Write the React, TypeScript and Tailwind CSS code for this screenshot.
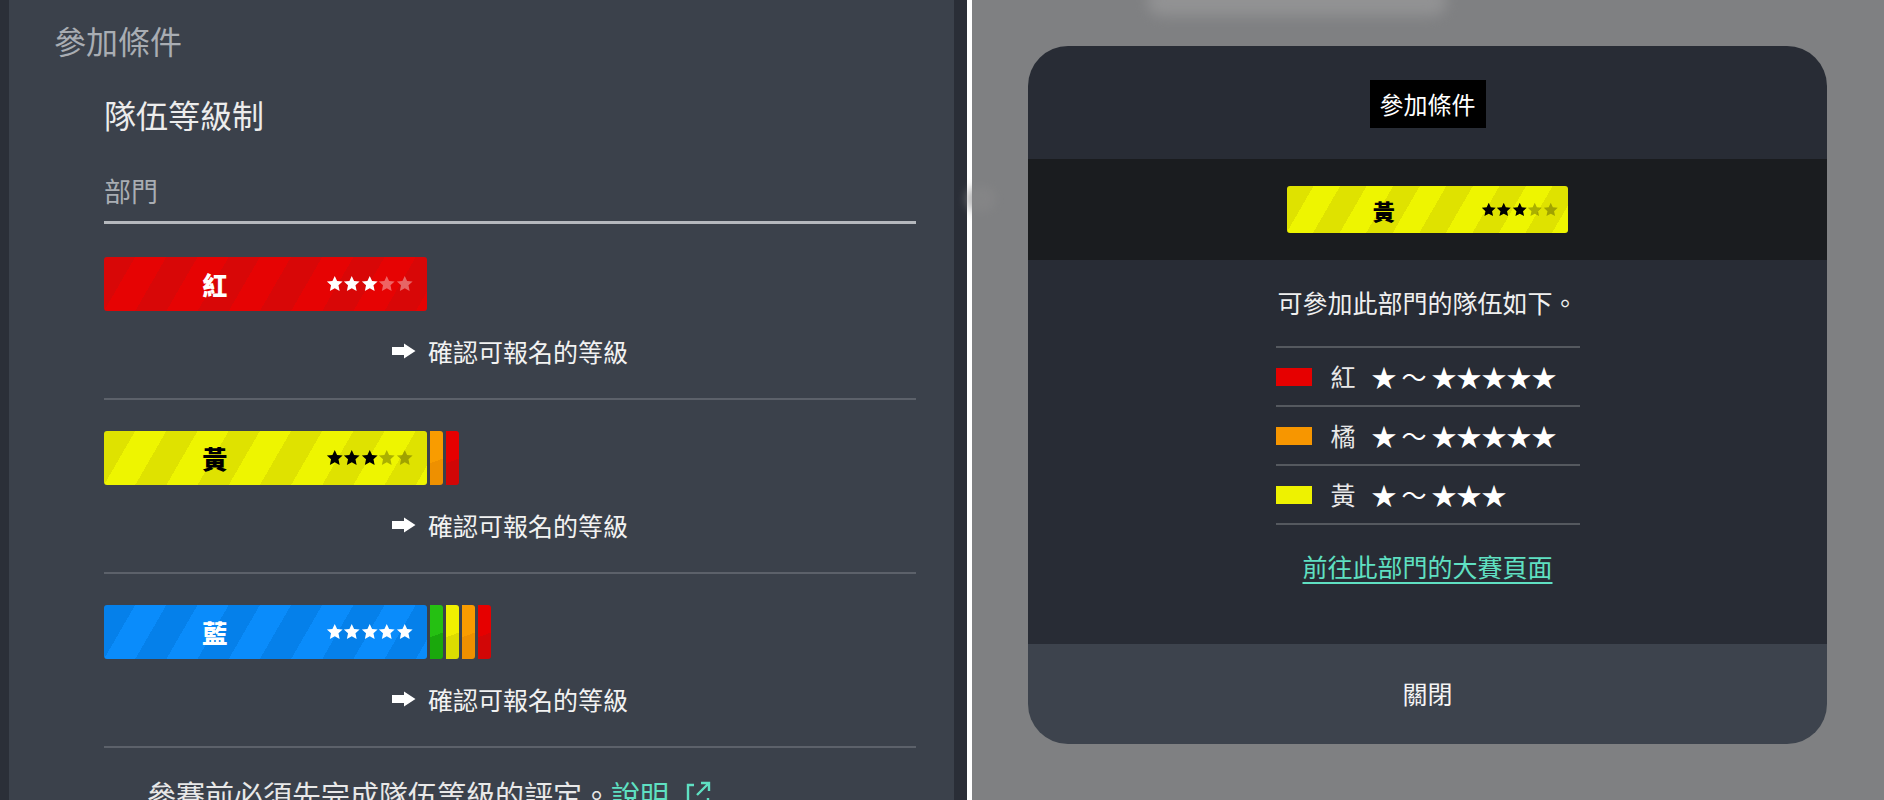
import React from "react";

const STAR_POINTS = "12,1.2 15.2,8.1 22.8,9 17.1,14.2 18.7,21.8 12,18 5.3,21.8 6.9,14.2 1.2,9 8.8,8.1";

function Star({ size, color, opacity }: { size: number; color: string; opacity: number }) {
  return (
    <svg width={size} height={size} viewBox="0 0 24 24" style={{ opacity }}>
      <polygon points={STAR_POINTS} fill={color} />
    </svg>
  );
}

type BarKind = "red" | "yellow" | "blue";

const barBg: Record<BarKind, string> = {
  red: "bg-[repeating-linear-gradient(120deg,#d80707_0px,#d80707_27px,#e60303_27px,#e60303_54px)]",
  yellow: "bg-[repeating-linear-gradient(120deg,#dfe200_0px,#dfe200_27px,#eef500_27px,#eef500_54px)]",
  blue: "bg-[repeating-linear-gradient(120deg,#0580ea_0px,#0580ea_27px,#0a8cfb_27px,#0a8cfb_54px)]",
};

const barSmallBg: Record<BarKind, string> = {
  red: "bg-[repeating-linear-gradient(120deg,#d80707_0px,#d80707_23px,#e60303_23px,#e60303_46px)]",
  yellow: "bg-[repeating-linear-gradient(120deg,#dfe200_0px,#dfe200_23px,#eef500_23px,#eef500_46px)]",
  blue: "bg-[repeating-linear-gradient(120deg,#0580ea_0px,#0580ea_23px,#0a8cfb_23px,#0a8cfb_46px)]",
};

const tabBg: Record<string, string> = {
  green: "bg-[linear-gradient(160deg,#25c012_55%,#1aa80c_55%)]",
  yellow: "bg-[linear-gradient(160deg,#f0f000_55%,#dcdc00_55%)]",
  orange: "bg-[linear-gradient(160deg,#f99c00_55%,#ee9000_55%)]",
  red: "bg-[linear-gradient(160deg,#e60000_55%,#d20606_55%)]",
};

function Bar({
  kind,
  label,
  filled,
  small,
}: {
  kind: BarKind;
  label: string;
  filled: number;
  small?: boolean;
}) {
  const textColor = kind === "yellow" ? "text-black" : "text-white";
  const starColor = kind === "yellow" ? "#000000" : "#ffffff";
  const fadeOpacity = kind === "yellow" ? 0.28 : 0.38;
  const starSize = small ? 15.5 : 17.5;
  return (
    <div
      className={
        small
          ? `flex h-[47px] w-[281px] items-center rounded-[3px] ${barSmallBg[kind]}`
          : `flex h-[54px] w-[323px] items-center rounded-[3px] ${barBg[kind]}`
      }
    >
      <span
        className={
          small
            ? `w-[196px] text-center text-[22px] font-black leading-none ${textColor}`
            : `w-[226px] text-center text-[25px] font-black leading-none ${textColor}`
        }
      >
        {label}
      </span>
      <div className={small ? "ml-auto mr-[10px] flex" : "ml-auto mr-[14px] flex"}>
        {[0, 1, 2, 3, 4].map((i) => (
          <Star key={i} size={starSize} color={starColor} opacity={i < filled ? 1 : fadeOpacity} />
        ))}
      </div>
    </div>
  );
}

function Tab({ color }: { color: string }) {
  return <div className={`ml-[3px] h-[54px] w-[13px] rounded-r-[3px] ${tabBg[color]}`} />;
}

function Arrow() {
  return (
    <svg width="24" height="16" viewBox="0 0 24 16" className="mr-[12px]">
      <path d="M0 4 H12 V0.5 L23.5 8 L12 15.5 V12 H0 Z" fill="#ffffff" />
    </svg>
  );
}

function Confirm() {
  return (
    <div className="mt-[22px] flex h-[36px] items-center justify-center text-[25px] leading-[36px] text-[#f2f2f2]">
      <Arrow />
      <span>確認可報名的等級</span>
    </div>
  );
}

function Section({ children }: { children: React.ReactNode }) {
  return (
    <div>
      <div className="flex">{children}</div>
      <Confirm />
      <div className="mt-[29px] h-[2px] bg-[#5c616a]" />
    </div>
  );
}

function ExternalIcon() {
  return (
    <svg width="30" height="30" viewBox="0 0 30 30" className="ml-[14px] inline-block align-[-2px]">
      <path d="M11 6 H5 V26 H25 V19" stroke="#5fe0c2" strokeWidth="2.4" fill="none" />
      <path d="M14 16 L26 4 M18 4 H26 V12" stroke="#5fe0c2" strokeWidth="2.4" fill="none" />
    </svg>
  );
}

function Row({ swatch, label, stars }: { swatch: string; label: string; stars: string }) {
  return (
    <div className="flex h-[57px] items-center text-[25px] text-white">
      <div className={`h-[18px] w-[36px] ${swatch}`} />
      <span className="ml-[19px] text-[#e8e8e8]">{label}</span>
      <span className="ml-[16px]">★</span>
      <span className="mx-[5px]">～</span>
      <span>{stars}</span>
    </div>
  );
}

export default function App() {
  return (
    <div className="flex h-[800px] w-[1884px] overflow-hidden font-['Noto_Sans_CJK_TC','Noto_Sans',sans-serif]">
      <div className="w-[9px] bg-[#2b2f38]" />
      <div className="w-[945px] bg-[#3b414b]">
        <div className="pl-[45px] pt-[20px] text-[32px] leading-[40px] text-[#a9adb3]">參加條件</div>
        <div className="ml-[95px] w-[812px]">
          <div className="mt-[34px] text-[32px] leading-[40px] text-[#ececec]">隊伍等級制</div>
          <div className="mt-[39px] text-[27px] leading-[36px] text-[#a9adb3]">部門</div>
          <div className="mt-[12px] h-[3px] bg-[#b5b8bd]" />
          <div className="mt-[33px] flex flex-col gap-[31px]">
            <Section>
              <Bar kind="red" label="紅" filled={3} />
            </Section>
            <Section>
              <Bar kind="yellow" label="黃" filled={3} />
              <Tab color="orange" />
              <Tab color="red" />
            </Section>
            <Section>
              <Bar kind="blue" label="藍" filled={5} />
              <Tab color="green" />
              <Tab color="yellow" />
              <Tab color="orange" />
              <Tab color="red" />
            </Section>
          </div>
          <div className="ml-[43px] mt-[26px] whitespace-nowrap text-[29px] leading-[40px] text-[#e8e8e8]">
            參賽前必須先完成隊伍等級的評定。<span className="text-[#5fe0c2]">說明</span>
            <ExternalIcon />
          </div>
        </div>
      </div>
      <div className="w-[13px] bg-[#2a2e37]" />
      <div className="w-[5px] bg-white" />
      <div className="relative flex-1 bg-[#7f8082] pl-[56px] pt-[46px]">
        <div className="absolute left-[175px] top-[-14px] h-[30px] w-[300px] rounded-full bg-[#9a9a9b] opacity-70 blur-[7px]" />
        <div className="absolute left-[-6px] top-[186px] h-[26px] w-[30px] rounded-full bg-[#888889] opacity-60 blur-[5px]" />
        <div className="relative flex h-[698px] w-[799px] flex-col overflow-hidden rounded-[40px]">
          <div className="flex h-[113px] justify-center bg-[#282c35] pt-[34px]">
            <div className="h-[48px] bg-black px-[10px] text-[24px] leading-[48px] text-white">參加條件</div>
          </div>
          <div className="flex h-[101px] items-center justify-center bg-[#1a1c1f]">
            <Bar kind="yellow" label="黃" filled={3} small />
          </div>
          <div className="flex h-[384px] flex-col items-center bg-[#282c35] pt-[24px]">
            <div className="text-[25px] leading-[36px] text-[#f0f0f0]">可參加此部門的隊伍如下。</div>
            <div className="mt-[26px] w-[304px]">
              <div className="h-[2px] bg-[#55595f]" />
              <Row swatch="bg-[#e60000]" label="紅" stars="★★★★★" />
              <div className="h-[2px] bg-[#55595f]" />
              <Row swatch="bg-[#f79600]" label="橘" stars="★★★★★" />
              <div className="h-[2px] bg-[#55595f]" />
              <Row swatch="bg-[#eef200]" label="黃" stars="★★★" />
              <div className="h-[2px] bg-[#55595f]" />
            </div>
            <div className="mt-[23px] text-[25px] leading-[36px] text-[#5fe0c2] underline decoration-[2px] underline-offset-[5px]">
              前往此部門的大賽頁面
            </div>
          </div>
          <div className="flex h-[100px] items-center justify-center bg-[#3d434d] text-[25px] text-[#f4f4f4]">
            關閉
          </div>
        </div>
      </div>
    </div>
  );
}
